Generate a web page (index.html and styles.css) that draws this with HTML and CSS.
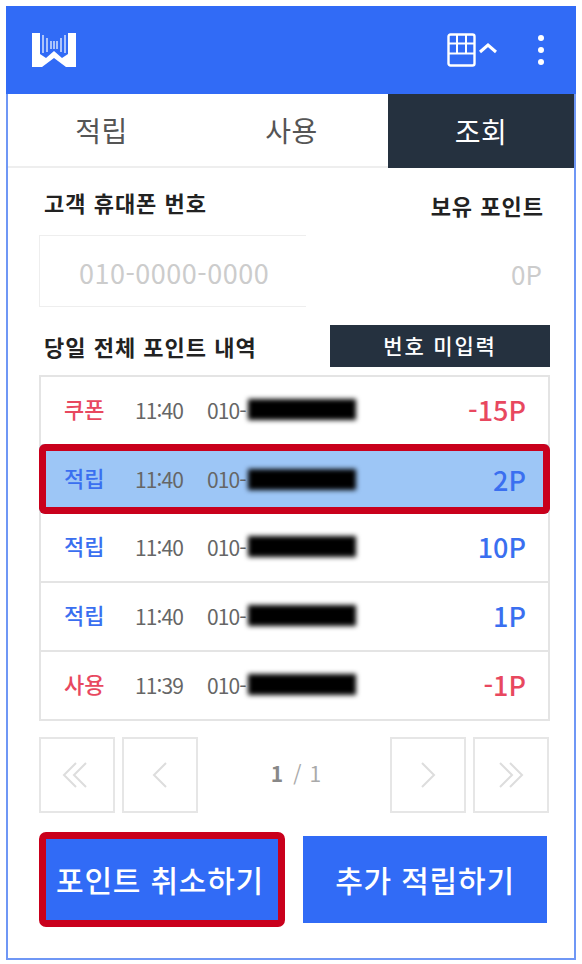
FILE: index.html
```html
<!DOCTYPE html>
<html lang="ko">
<head>
    <meta charset="UTF-8">
    <meta name="viewport" content="width=device-width, initial-scale=1.0">
    <title>포인트 조회</title>
    <link rel="stylesheet" href="styles.css">
</head>
<body>
    <div class="app">
        <header class="top-bar">
            <svg class="logo" width="44" height="34" viewBox="0 0 44 34">
                <path d="M0 0H8V21L14 25L22 18L30 25L36 21V0H44V34H34L22 25L10 34H0Z" fill="#fff"/>
                <path d="M11 2V20M15 5V19M19 8V16M22 8V16M25 8V16M29 5V19M33 2V20" stroke="#fff" stroke-width="1.5" fill="none" opacity="0.8"/>
            </svg>
            <div class="top-icons">
                <svg width="52" height="34" viewBox="0 0 52 34">
                    <rect x="1.5" y="1.5" width="26" height="31" rx="2" fill="none" stroke="#fff" stroke-width="2.4"/>
                    <path d="M1.5 10.5H27.5M1.5 20.5H27.5M10 1.5V20.5M19 1.5V20.5" stroke="#fff" stroke-width="2" fill="none"/>
                    <path d="M33 19L41 12L49 19" stroke="#fff" stroke-width="3" fill="none"/>
                </svg>
                <div class="dots"><i></i><i></i><i></i></div>
            </div>
        </header>

        <nav class="tabs">
            <div class="tab">적립</div>
            <div class="tab">사용</div>
            <div class="tab tab-on">조회</div>
        </nav>

        <main class="content">
            <div class="field-heads">
                <strong>고객 휴대폰 번호</strong>
                <strong class="point-head">보유 포인트</strong>
            </div>
            <div class="field-row">
                <div class="phone-input">010-0000-0000</div>
                <div class="point-value">0P</div>
            </div>

            <div class="list-head">
                <strong>당일 전체 포인트 내역</strong>
                <div class="no-number">번호 미입력</div>
            </div>

            <div class="list">
                <div class="row minus">
                    <span class="kind">쿠폰</span><span class="time">11:40</span><span class="phone">010-<b class="hidden-no"></b></span><span class="amount">-15P</span>
                </div>
                <div class="row plus row-marked">
                    <span class="kind">적립</span><span class="time">11:40</span><span class="phone">010-<b class="hidden-no"></b></span><span class="amount">2P</span>
                </div>
                <div class="row plus">
                    <span class="kind">적립</span><span class="time">11:40</span><span class="phone">010-<b class="hidden-no"></b></span><span class="amount">10P</span>
                </div>
                <div class="row plus">
                    <span class="kind">적립</span><span class="time">11:40</span><span class="phone">010-<b class="hidden-no"></b></span><span class="amount">1P</span>
                </div>
                <div class="row minus">
                    <span class="kind">사용</span><span class="time">11:39</span><span class="phone">010-<b class="hidden-no"></b></span><span class="amount">-1P</span>
                </div>
            </div>

            <div class="pager">
                <div class="page-btn"><svg class="first-icon" width="26" height="28" viewBox="0 0 26 28"><path d="M14 2L2 14L14 26M24 2L12 14L24 26" fill="none" stroke="#ddd" stroke-width="2"/></svg></div>
                <div class="page-btn"><svg width="16" height="28" viewBox="0 0 16 28"><path d="M14 2L2 14L14 26" fill="none" stroke="#ddd" stroke-width="2"/></svg></div>
                <div class="page-no"><b>1</b><span class="page-sep">/</span>1</div>
                <div class="page-btn"><svg width="16" height="28" viewBox="0 0 16 28"><path d="M2 2L14 14L2 26" fill="none" stroke="#ddd" stroke-width="2"/></svg></div>
                <div class="page-btn"><svg width="26" height="28" viewBox="0 0 26 28"><path d="M2 2L14 14L2 26M12 2L24 14L12 26" fill="none" stroke="#ddd" stroke-width="2"/></svg></div>
            </div>

            <div class="actions">
                <div class="action action-marked">포인트 취소하기</div>
                <div class="action">추가 적립하기</div>
            </div>
        </main>
    </div>
</body>
</html>
```

FILE: styles.css
```css
* {
    box-sizing: border-box;
}
body {
    margin: 0;
    padding: 6px;
    background: #fff;
    font-family: "Noto Sans CJK KR", "Noto Sans", sans-serif;
    color: #222;
}
.app {
    width: 570px;
    height: 954px;
    border: 2px solid #6f97f5;
    border-top: 0;
    display: flex;
    flex-direction: column;
}
.top-bar {
    height: 88px;
    margin: 0 -2px;
    background: #316bf6;
    display: flex;
    align-items: center;
    justify-content: space-between;
    padding: 0 32px 0 26px;
}
.logo {
    margin-top: -1px;
}
.top-icons {
    display: flex;
    align-items: center;
    gap: 39px;
}
.dots {
    display: flex;
    flex-direction: column;
    gap: 6px;
}
.dots i {
    display: block;
    width: 6px;
    height: 6px;
    border-radius: 50%;
    background: #fff;
}
.tabs {
    display: flex;
    height: 74px;
    border-bottom: 2px solid #eee;
}
.tab {
    flex: 1;
    display: flex;
    align-items: center;
    justify-content: center;
    padding-right: 3px;
    font-size: 28px;
    letter-spacing: 0.5px;
    color: #555;
}
.tab-on {
    flex: 0 0 186px;
    padding-right: 0;
    background: #25313f;
    color: #fff;
    margin-bottom: -2px;
}
.content {
    padding: 0 25px 0 31px;
}
.field-heads {
    display: flex;
    justify-content: space-between;
    padding: 19px 5px 0 5px;
    font-size: 22px;
    letter-spacing: 1px;
    line-height: 30px;
}
.field-heads strong {
    font-weight: 700;
}
.point-head {
    margin-top: 3px;
}
.field-row {
    display: flex;
    justify-content: space-between;
    align-items: center;
    margin-top: 15px;
    padding-right: 7px;
}
.phone-input {
    width: 267px;
    height: 72px;
    border: 1px solid #eee;
    border-right: 0;
    padding-left: 39px;
    line-height: 74px;
    font-size: 27px;
    letter-spacing: 0.5px;
    color: #ccc;
}
.point-value {
    font-size: 26px;
    margin-top: 4px;
    color: #ccc;
}
.list-head {
    display: flex;
    justify-content: space-between;
    align-items: flex-end;
    margin-top: 18px;
}
.list-head strong {
    font-weight: 700;
    font-size: 22px;
    letter-spacing: 1px;
    line-height: 30px;
    margin-left: 5px;
    margin-bottom: 6px;
}
.no-number {
    width: 220px;
    height: 42px;
    margin-right: -1px;
    background: #25313f;
    color: #fff;
    font-size: 21px;
    font-weight: 500;
    letter-spacing: 1.8px;
    padding-bottom: 2px;
    display: flex;
    align-items: center;
    justify-content: center;
}
.list {
    margin-top: 8px;
    width: 511px;
    border: 2px solid #e4e4e4;
    border-bottom: 0;
}
.row {
    height: 69px;
    display: flex;
    align-items: center;
    border-bottom: 2px solid #e4e4e4;
    padding: 0 22px 2px 23px;
}
.kind {
    width: 71px;
    font-size: 22px;
    font-weight: 500;
    margin-top: -4px;
}
.time {
    width: 72px;
    font-size: 21px;
    letter-spacing: -0.9px;
    color: #666;
}
.phone {
    display: flex;
    align-items: center;
    font-size: 21px;
    letter-spacing: -0.9px;
    color: #666;
}
.hidden-no {
    width: 108px;
    height: 21px;
    margin-left: 2px;
    background: #000;
    filter: blur(2.5px);
}
.amount {
    margin-left: auto;
    font-size: 27px;
    font-weight: 500;
}
.plus .kind, .plus .amount {
    color: #3a6ff0;
}
.minus .kind, .minus .amount {
    color: #e8485f;
}
.row-marked {
    background: #9dc6f6;
    margin: -2px -2px 0;
    height: 70px;
    padding: 0 24px 0 25px;
    border: 0;
    border-radius: 6px;
    box-shadow: inset 0 0 0 7px #c9001c;
    position: relative;
}
.pager {
    display: flex;
    align-items: center;
    gap: 7px;
    margin-top: 16px;
}
.page-btn {
    width: 76px;
    height: 76px;
    border: 2px solid #e6e6e6;
    display: flex;
    align-items: center;
    justify-content: center;
}
.first-icon {
    margin-left: -4px;
}
.page-no {
    flex: 1;
    text-align: center;
    font-size: 21px;
    padding: 0 0 4px 4px;
    color: #aaa;
}
.page-no b {
    color: #888;
}
.page-sep {
    margin: 0 8px 0 10px;
}
.actions {
    display: flex;
    align-items: center;
    justify-content: space-between;
    margin-top: 19px;
    padding-right: 2px;
}
.action {
    width: 244px;
    height: 87px;
    background: #316bf6;
    color: #fff;
    font-size: 30px;
    letter-spacing: 0.8px;
    font-weight: 500;
    padding-bottom: 2px;
    display: flex;
    align-items: center;
    justify-content: center;
}
.action-marked {
    width: 246px;
    height: 95px;
    padding-right: 4px;
    border: 7px solid #c9001c;
    border-radius: 7px;
}
```
